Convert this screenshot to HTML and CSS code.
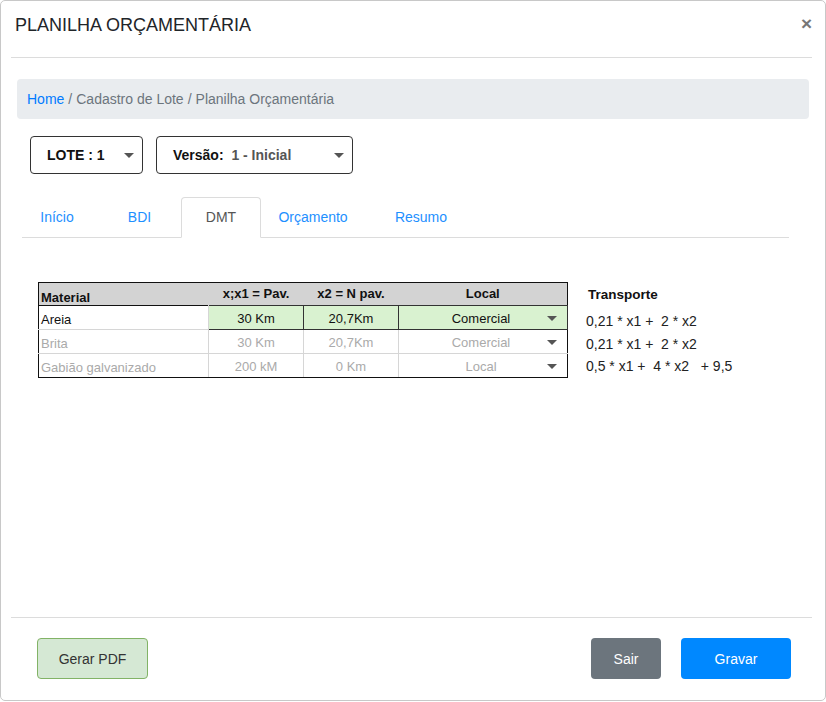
FILE: index.html
```html
<!DOCTYPE html>
<html lang="pt">
<head>
<meta charset="utf-8">
<title>Planilha Orçamentária</title>
<link rel="stylesheet" href="styles.css">
</head>
<body>
<div class="modal">
  <div class="modal-header">
    <h1 class="modal-title">PLANILHA ORÇAMENTÁRIA</h1>
    <span class="close">×</span>
  </div>
  <div class="modal-body">
    <nav class="breadcrumb"><a class="crumb-link">Home</a><span class="crumb-sep">/</span>Cadastro de Lote<span class="crumb-sep">/</span>Planilha Orçamentária</nav>

    <div class="selects">
      <div class="select select-lote"><span class="select-label">LOTE : 1</span><span class="caret"></span></div>
      <div class="select select-versao"><span class="select-label">Versão:&nbsp; <span class="select-value">1 - Inicial</span></span><span class="caret"></span></div>
    </div>

    <div class="tabs">
      <span class="tab tab-inicio">Início</span>
      <span class="tab tab-bdi">BDI</span>
      <span class="tab tab-dmt active">DMT</span>
      <span class="tab tab-orc">Orçamento</span>
      <span class="tab tab-resumo">Resumo</span>
    </div>

    <div class="dmt">
      <table class="grid">
        <thead>
          <tr>
            <th class="c-mat">Material</th>
            <th class="c-x1">x;x1 = Pav.</th>
            <th class="c-x2">x2 = N pav.</th>
            <th class="c-local">Local</th>
          </tr>
        </thead>
        <tbody>
          <tr class="row-active">
            <td class="c-mat">Areia</td>
            <td class="cell-green">30 Km</td>
            <td class="cell-green">20,7Km</td>
            <td class="cell-green"><div class="dd"><span class="dd-text">Comercial</span><span class="caret caret-sm"></span></div></td>
          </tr>
          <tr class="row-muted">
            <td class="c-mat">Brita</td>
            <td>30 Km</td>
            <td>20,7Km</td>
            <td><div class="dd"><span class="dd-text">Comercial</span><span class="caret caret-sm"></span></div></td>
          </tr>
          <tr class="row-muted">
            <td class="c-mat">Gabião galvanizado</td>
            <td>200 kM</td>
            <td>0 Km</td>
            <td><div class="dd"><span class="dd-text">Local</span><span class="caret caret-sm"></span></div></td>
          </tr>
        </tbody>
      </table>
      <div class="transporte">
        <div class="t-title">Transporte</div>
        <div class="t-line">0,21 * x1 +&nbsp; 2 * x2</div>
        <div class="t-line">0,21 * x1 +&nbsp; 2 * x2</div>
        <div class="t-line">0,5 * x1 +&nbsp; 4 * x2 &nbsp; + 9,5</div>
      </div>
    </div>
  </div>
  <div class="modal-footer">
    <button class="btn btn-pdf">Gerar PDF</button>
    <div class="footer-right">
      <button class="btn btn-sair">Sair</button>
      <button class="btn btn-gravar">Gravar</button>
    </div>
  </div>
</div>
</body>
</html>
```
FILE: styles.css
```css
* { box-sizing: border-box; }
html, body { margin: 0; padding: 0; background: #fff; }
body {
  font-family: "Liberation Sans", Arial, sans-serif;
  font-size: 14px;
  color: #212529;
}
.modal {
  width: 826px;
  height: 701px;
  border: 1px solid #c8c8c8;
  border-radius: 5px;
  display: flex;
  flex-direction: column;
  background: #fff;
}
.modal-header {
  margin: 0 13px 0 10px;
  padding: 12px 0 0 4px;
  height: 57px;
  border-bottom: 1px solid #dcdcdc;
  display: flex;
  justify-content: space-between;
  align-items: flex-start;
}
.modal-title {
  margin: 0;
  font-weight: normal;
  font-size: 18px;
  line-height: 24px;
  color: #212529;
}
.close {
  font-size: 19px;
  line-height: 22px;
  color: #777;
  font-weight: bold;
}
.modal-body {
  flex: 1;
  padding: 21px 16px 0 16px;
}
.breadcrumb {
  height: 40px;
  background: #e9ecef;
  border-radius: 4px;
  padding: 0 10px;
  display: flex;
  align-items: center;
  color: #6c757d;
  font-size: 14px;
}
.crumb-link { color: #007bff; }
.crumb-sep { padding: 0 4px; }
.selects {
  display: flex;
  gap: 13px;
  margin: 17px 0 0 13px;
}
.select {
  height: 38px;
  border: 1px solid #333;
  border-radius: 4px;
  display: flex;
  align-items: center;
  justify-content: space-between;
  padding: 0 8px 0 16px;
  font-weight: bold;
  font-size: 14px;
  color: #111;
}
.select-lote { width: 113px; }
.select-versao { width: 197px; }
.select-value { color: #555; }
.caret {
  width: 0;
  height: 0;
  border-left: 5px solid transparent;
  border-right: 5px solid transparent;
  border-top: 5px solid #555;
}
.tabs {
  display: flex;
  margin: 23px 0 0 5px;
  width: 767px;
  height: 41px;
  border-bottom: 1px solid #dcdcdc;
  font-size: 14px;
}
.tab {
  height: 41px;
  display: flex;
  align-items: center;
  justify-content: center;
  padding-bottom: 2px;
  color: #1e90ff;
  border: 1px solid transparent;
  border-radius: 4px 4px 0 0;
}
.tab-inicio { width: 70px; }
.tab-bdi { width: 89px; padding-left: 6px; }
.tab-dmt { width: 80px; }
.tab-orc { width: 104px; }
.tab-resumo { width: 112px; }
.tab.active {
  color: #555;
  border-color: #dcdcdc #dcdcdc #fff;
  background: #fff;
  margin-bottom: -1px;
}
.dmt {
  display: flex;
  align-items: flex-start;
  margin: 44px 0 0 21px;
}
.grid {
  border-collapse: collapse;
  border: 1px solid #111;
  font-size: 13px;
  color: #111;
}
.grid th {
  background: #d3d3d3;
  height: 23px;
  font-weight: bold;
  text-align: center;
  vertical-align: top;
  padding: 3px 0 0;
  font-size: 13px;
}
.grid th.c-mat {
  text-align: left;
  vertical-align: bottom;
  padding: 0 0 0 2px;
}
.c-mat { width: 170px; }
.c-x1 { width: 95px; }
.c-x2 { width: 95px; }
.c-local { width: 169px; }
.grid td {
  height: 24px;
  padding: 1px 0 0;
  text-align: center;
  border: 1px solid #d6d6d6;
  vertical-align: middle;
}
.grid td.c-mat {
  text-align: left;
  padding: 4px 0 0 2px;
  border-left: 1px solid #111;
}
.grid td:last-child { border-right: 1px solid #111; }
.grid tr:last-child td { border-bottom: 1px solid #111; }
.row-active td { color: #111; }
.grid td.cell-green {
  background: #d9f2d0;
  border: 1px solid #333;
}
.row-active td.c-mat { border-top: 1px solid #111; }
.row-muted td { color: #aaa; }
.dd {
  display: flex;
  align-items: center;
  padding: 0 10px 0 0;
}
.dd-text { flex: 1; text-align: center; padding-left: 16px; }
.caret-sm {
  border-top: 5px solid #555;
}
.transporte {
  margin-left: 18px;
  font-size: 14px;
  color: #222;
}
.t-title {
  font-weight: bold;
  font-size: 13.5px;
  height: 25px;
  padding-top: 5px;
  padding-left: 2px;
  color: #111;
}
.t-line {
  height: 22.5px;
  line-height: 22px;
  padding-top: 3px;
}
.modal-footer {
  margin: 0 13px 0 10px;
  border-top: 1px solid #dcdcdc;
  padding: 20px 21px 21px 26px;
  display: flex;
  justify-content: space-between;
  align-items: center;
}
.footer-right { display: flex; gap: 20px; }
.btn {
  height: 41px;
  border-radius: 4px;
  font-family: "Liberation Sans", Arial, sans-serif;
  font-size: 14px;
  border: 1px solid transparent;
  cursor: pointer;
}
.btn-pdf {
  width: 111px;
  background: #d5e8d4;
  border-color: #82b366;
  color: #333;
}
.btn-sair {
  width: 70px;
  background: #6c757d;
  color: #fff;
}
.btn-gravar {
  width: 110px;
  background: #0088ff;
  color: #fff;
}
```
